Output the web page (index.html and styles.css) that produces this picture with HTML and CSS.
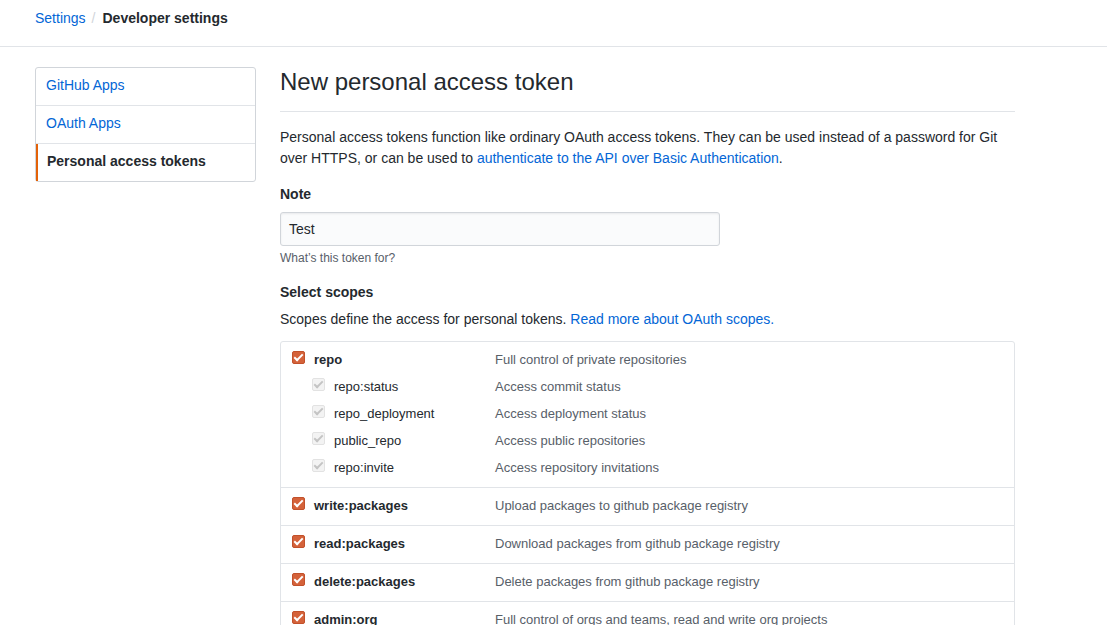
FILE: index.html
```html
<!DOCTYPE html>
<html>
<head>
<meta charset="utf-8">
<link rel="stylesheet" href="styles.css">
</head>
<body>
<header class="topbar">
  <nav class="crumbs"><a class="link" href="#">Settings</a><span class="sep">/</span><strong>Developer settings</strong></nav>
</header>
<div class="layout">
  <aside class="menu">
    <a class="menu-item" href="#">GitHub Apps</a>
    <a class="menu-item" href="#">OAuth Apps</a>
    <a class="menu-item selected" href="#">Personal access tokens</a>
  </aside>
  <main class="main">
    <h1 class="title">New personal access token</h1>
    <p class="intro">Personal access tokens function like ordinary OAuth access tokens. They can be used instead of a password for Git over HTTPS, or can be used to <a class="link" href="#">authenticate to the API over Basic Authentication</a>.</p>
    <label class="label">Note</label>
    <div class="input">Test</div>
    <p class="note">What’s this token for?</p>
    <h3 class="label scopes-title">Select scopes</h3>
    <p class="scopes-desc">Scopes define the access for personal tokens. <a class="link" href="#">Read more about OAuth scopes.</a></p>
    <div class="scopes">
      <div class="group">
        <div class="row"><span class="cb on"></span><span class="name">repo</span><span class="desc">Full control of private repositories</span></div>
        <div class="row sub"><span class="cb off"></span><span class="name">repo:status</span><span class="desc">Access commit status</span></div>
        <div class="row sub"><span class="cb off"></span><span class="name">repo_deployment</span><span class="desc">Access deployment status</span></div>
        <div class="row sub"><span class="cb off"></span><span class="name">public_repo</span><span class="desc">Access public repositories</span></div>
        <div class="row sub"><span class="cb off"></span><span class="name">repo:invite</span><span class="desc">Access repository invitations</span></div>
      </div>
      <div class="group">
        <div class="row"><span class="cb on"></span><span class="name">write:packages</span><span class="desc">Upload packages to github package registry</span></div>
      </div>
      <div class="group">
        <div class="row"><span class="cb on"></span><span class="name">read:packages</span><span class="desc">Download packages from github package registry</span></div>
      </div>
      <div class="group">
        <div class="row"><span class="cb on"></span><span class="name">delete:packages</span><span class="desc">Delete packages from github package registry</span></div>
      </div>
      <div class="group">
        <div class="row"><span class="cb on"></span><span class="name">admin:org</span><span class="desc">Full control of orgs and teams, read and write org projects</span></div>
      </div>
    </div>
  </main>
</div>
</body>
</html>
```
FILE: styles.css
```css
* { box-sizing: border-box; }
html, body { margin: 0; padding: 0; background: #fff; }
body {
  font-family: "Liberation Sans", Arial, sans-serif;
  font-size: 14px;
  line-height: 1.5;
  color: #24292e;
  overflow: hidden;
  height: 625px;
}
a { text-decoration: none; }
.link { color: #0366d6; }
.topbar {
  height: 47px;
  border-bottom: 1px solid #e1e4e8;
  padding: 8px 35px 0;
}
.crumbs { font-size: 14px; line-height: 21px; }
.crumbs strong { font-weight: bold; color: #24292e; }
.sep { color: #d1d5da; padding: 0 7px 0 6px; }
.layout {
  display: flex;
  padding: 20px 35px 0;
  gap: 24px;
}
.menu {
  width: 221px;
  flex: none;
  border: 1px solid #d1d5da;
  border-radius: 3px;
  align-self: flex-start;
}
.menu-item {
  display: block;
  height: 38px;
  padding: 7px 10px 9px;
  line-height: 21px;
  color: #0366d6;
  border-bottom: 1px solid #e1e4e8;
}
.menu-item:last-child { border-bottom: 0; height: 37px; }
.selected {
  color: #24292e;
  font-weight: bold;
  border-left: 2px solid #e36209;
  padding-left: 9px;
}
.main { width: 735px; flex: none; }
.title {
  font-size: 24px;
  font-weight: normal;
  line-height: 30px;
  margin: 0;
  padding: 0 0 14px;
  border-bottom: 1px solid #e1e4e8;
}
.intro { margin: 15px 0 15px; line-height: 21px; }
.label { display: block; font-weight: bold; font-size: 14px; line-height: 21px; margin: 0 0 7px; }
.input {
  width: 440px;
  height: 34px;
  background: #fafbfc;
  border: 1px solid #d1d5da;
  border-radius: 3px;
  box-shadow: inset 0 1px 2px rgba(27,31,35,0.075);
  padding: 6px 8px;
  line-height: 20px;
  font-size: 14px;
}
.note { margin: 3px 0 0; font-size: 12px; line-height: 18px; color: #586069; }
.scopes-title { margin-top: 15px; margin-bottom: 6px; }
.scopes-desc { margin: 0 0 11px; line-height: 21px; }
.scopes {
  border: 1px solid #e1e4e8;
  border-radius: 3px;
}
.group {
  padding: 4px 10px 6px;
  border-bottom: 1px solid #e1e4e8;
}
.row {
  display: flex;
  align-items: center;
  height: 27px;
}
.name { width: 181px; font-weight: bold; font-size: 13px; }
.desc { color: #586069; font-size: 13px; }
.sub { padding-left: 20px; }
.sub .name { width: 161px; font-weight: normal; }
.cb {
  width: 13px;
  height: 13px;
  border-radius: 2px;
  margin: -5px 9px 0 1px;
  flex: none;
  position: relative;
}
.cb.on { background: #d4623a; border: 1px solid #c2512b; }
.cb.off { background: #f3f3f3; border: 1px solid #e2e2e2; }
.cb::after {
  content: "";
  position: absolute;
  left: 3px;
  top: 0px;
  width: 3px;
  height: 7px;
  border: solid #fff;
  border-width: 0 2px 2px 0;
  transform: rotate(45deg);
}
.cb.off::after { border-color: #c4c4c4; }
```
